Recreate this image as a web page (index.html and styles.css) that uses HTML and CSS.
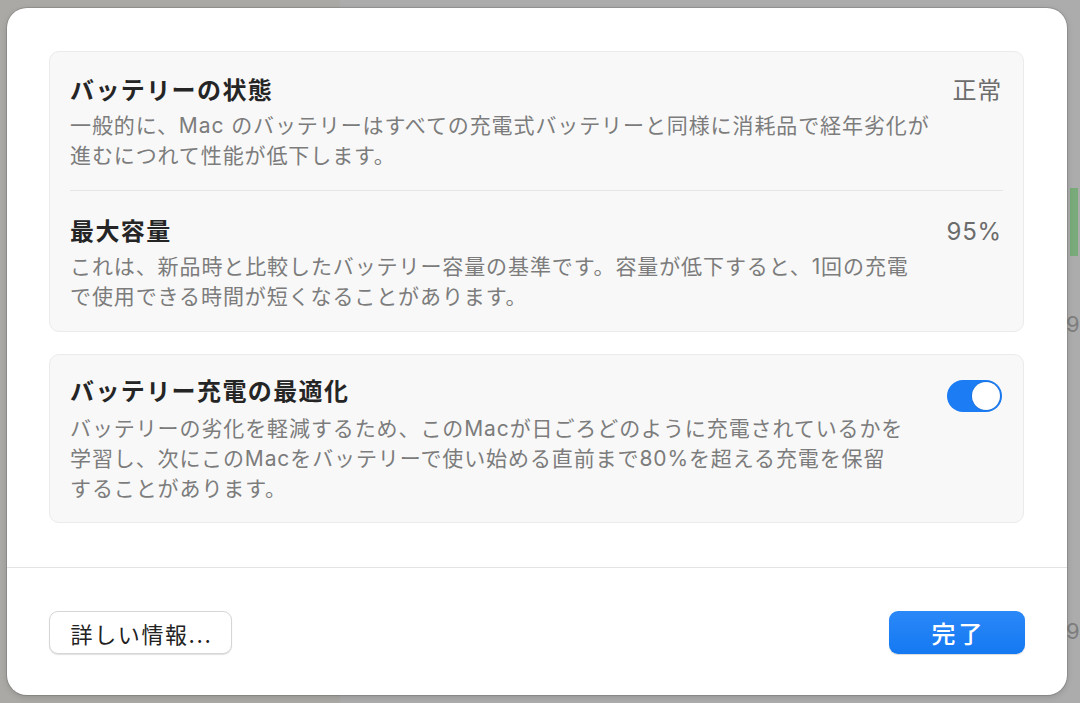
FILE: index.html
```html
<!DOCTYPE html>
<html lang="ja">
<head>
<meta charset="utf-8">
<link rel="stylesheet" href="styles.css">
</head>
<body>
<div class="backdrop">
  <div class="bg-bar"></div>
  <span class="bg-num bg-num1">9</span>
  <span class="bg-num bg-num2">9</span>
</div>
<div class="dialog">
  <div class="content">
    <section class="card">
      <div class="row">
        <div class="text">
          <div class="title">バッテリーの状態</div>
          <div class="desc">一般的に、Mac のバッテリーはすべての充電式バッテリーと同様に消耗品で経年劣化が<br>進むにつれて性能が低下します。</div>
        </div>
        <div class="value">正常</div>
      </div>
      <div class="divider"></div>
      <div class="row row2">
        <div class="text">
          <div class="title">最大容量</div>
          <div class="desc">これは、新品時と比較したバッテリー容量の基準です。容量が低下すると、1回の充電<br>で使用できる時間が短くなることがあります。</div>
        </div>
        <div class="value">95%</div>
      </div>
    </section>
    <section class="card card2">
      <div class="row row3">
        <div class="text">
          <div class="title">バッテリー充電の最適化</div>
          <div class="desc">バッテリーの劣化を軽減するため、このMacが日ごろどのように充電されているかを<br>学習し、次にこのMacをバッテリーで使い始める直前まで80%を超える充電を保留<br>することがあります。</div>
        </div>
        <div class="toggle"><div class="knob"></div></div>
      </div>
    </section>
  </div>
  <div class="footer">
    <button class="btn btn-info">詳しい情報...</button>
    <button class="btn btn-done">完了</button>
  </div>
</div>
</body>
</html>
```

FILE: styles.css
```css
html, body {
  margin: 0;
  padding: 0;
}
body {
  background: #a9a9a9;
  width: 1080px;
  height: 703px;
  overflow: hidden;
  padding: 8px 0 0 7px;
  box-sizing: border-box;
  font-family: Inter, "Noto Sans CJK JP", sans-serif;
  position: relative;
}
.backdrop {
  position: absolute;
  inset: 0;
  background: linear-gradient(to right, #aba9a6 0, #aba9a6 340px, #acacac 340px);
}
.bg-bar {
  position: absolute;
  left: 1070px;
  top: 188px;
  width: 8px;
  height: 68px;
  background: #79aa79;
}
.bg-num {
  position: absolute;
  left: 1066px;
  font-size: 22px;
  color: #7e7e7e;
}
.bg-num1 { top: 311px; }
.bg-num2 { top: 618px; }

.dialog {
  position: relative;
  width: 1060px;
  height: 687px;
  box-sizing: border-box;
  background: #ffffff;
  border-radius: 20px;
  box-shadow: 0 0 0 1px rgba(0,0,0,0.12), 0 2px 6px rgba(0,0,0,0.15);
  display: flex;
  flex-direction: column;
}
.content {
  padding: 43px 43px 0 42px;
  display: flex;
  flex-direction: column;
  gap: 22px;
}
.card {
  background: #f8f8f8;
  border: 1px solid #ebebeb;
  border-radius: 10px;
  display: flex;
  flex-direction: column;
}
.row {
  display: flex;
  justify-content: space-between;
  align-items: flex-start;
  padding: 24px 21px 19px 20px;
}
.row2 {
  padding-top: 26px;
}
.row3 {
  padding-top: 22px;
  padding-bottom: 18px;
}
.text {
  display: flex;
  flex-direction: column;
  gap: 5px;
}
.row3 .text { gap: 7px; }
.title {
  font-size: 24px;
  line-height: 30px;
  font-weight: 600;
  color: #252525;
  letter-spacing: 1.4px;
}
.desc {
  font-size: 21px;
  line-height: 30px;
  color: #7c7c7c;
  letter-spacing: 0.9px;
  white-space: nowrap;
}
.value {
  font-size: 24px;
  line-height: 30px;
  color: #6c6c6c;
  letter-spacing: 0.8px;
}
.divider {
  height: 1px;
  background: #e6e6e6;
  margin: 0 20px 0 20px;
}
.toggle {
  width: 55px;
  height: 32px;
  border-radius: 16px;
  background: #1b7cf4;
  box-sizing: border-box;
  padding: 2px;
  display: flex;
  justify-content: flex-end;
  margin-top: 3px;
}
.knob {
  width: 28px;
  height: 28px;
  border-radius: 50%;
  background: #ffffff;
  box-shadow: 0 0 0 0.5px rgba(0,0,0,0.15);
}
.footer {
  margin-top: 44px;
  border-top: 1px solid #e3e3e3;
  display: flex;
  justify-content: space-between;
  align-items: center;
  padding: 43px 42px 0 42px;
}
.btn {
  font-family: Inter, "Noto Sans CJK JP", sans-serif;
  height: 43px;
  border-radius: 9px;
  box-sizing: border-box;
  cursor: default;
}
.btn-info {
  width: 183px;
  background: #ffffff;
  color: #222222;
  border: 1px solid #d6d6d6;
  box-shadow: 0 1px 1px rgba(0,0,0,0.12);
  padding: 0 0 0 2px;
  font-size: 22px;
  letter-spacing: 1.6px;
}
.btn-done {
  width: 136px;
  background: linear-gradient(#2b88f8, #1479f2);
  color: #ffffff;
  border: none;
  box-shadow: 0 1px 1px rgba(0,0,0,0.15);
  font-weight: 500;
  font-size: 24px;
  letter-spacing: 3px;
  padding: 0 0 0 3px;
}
```
